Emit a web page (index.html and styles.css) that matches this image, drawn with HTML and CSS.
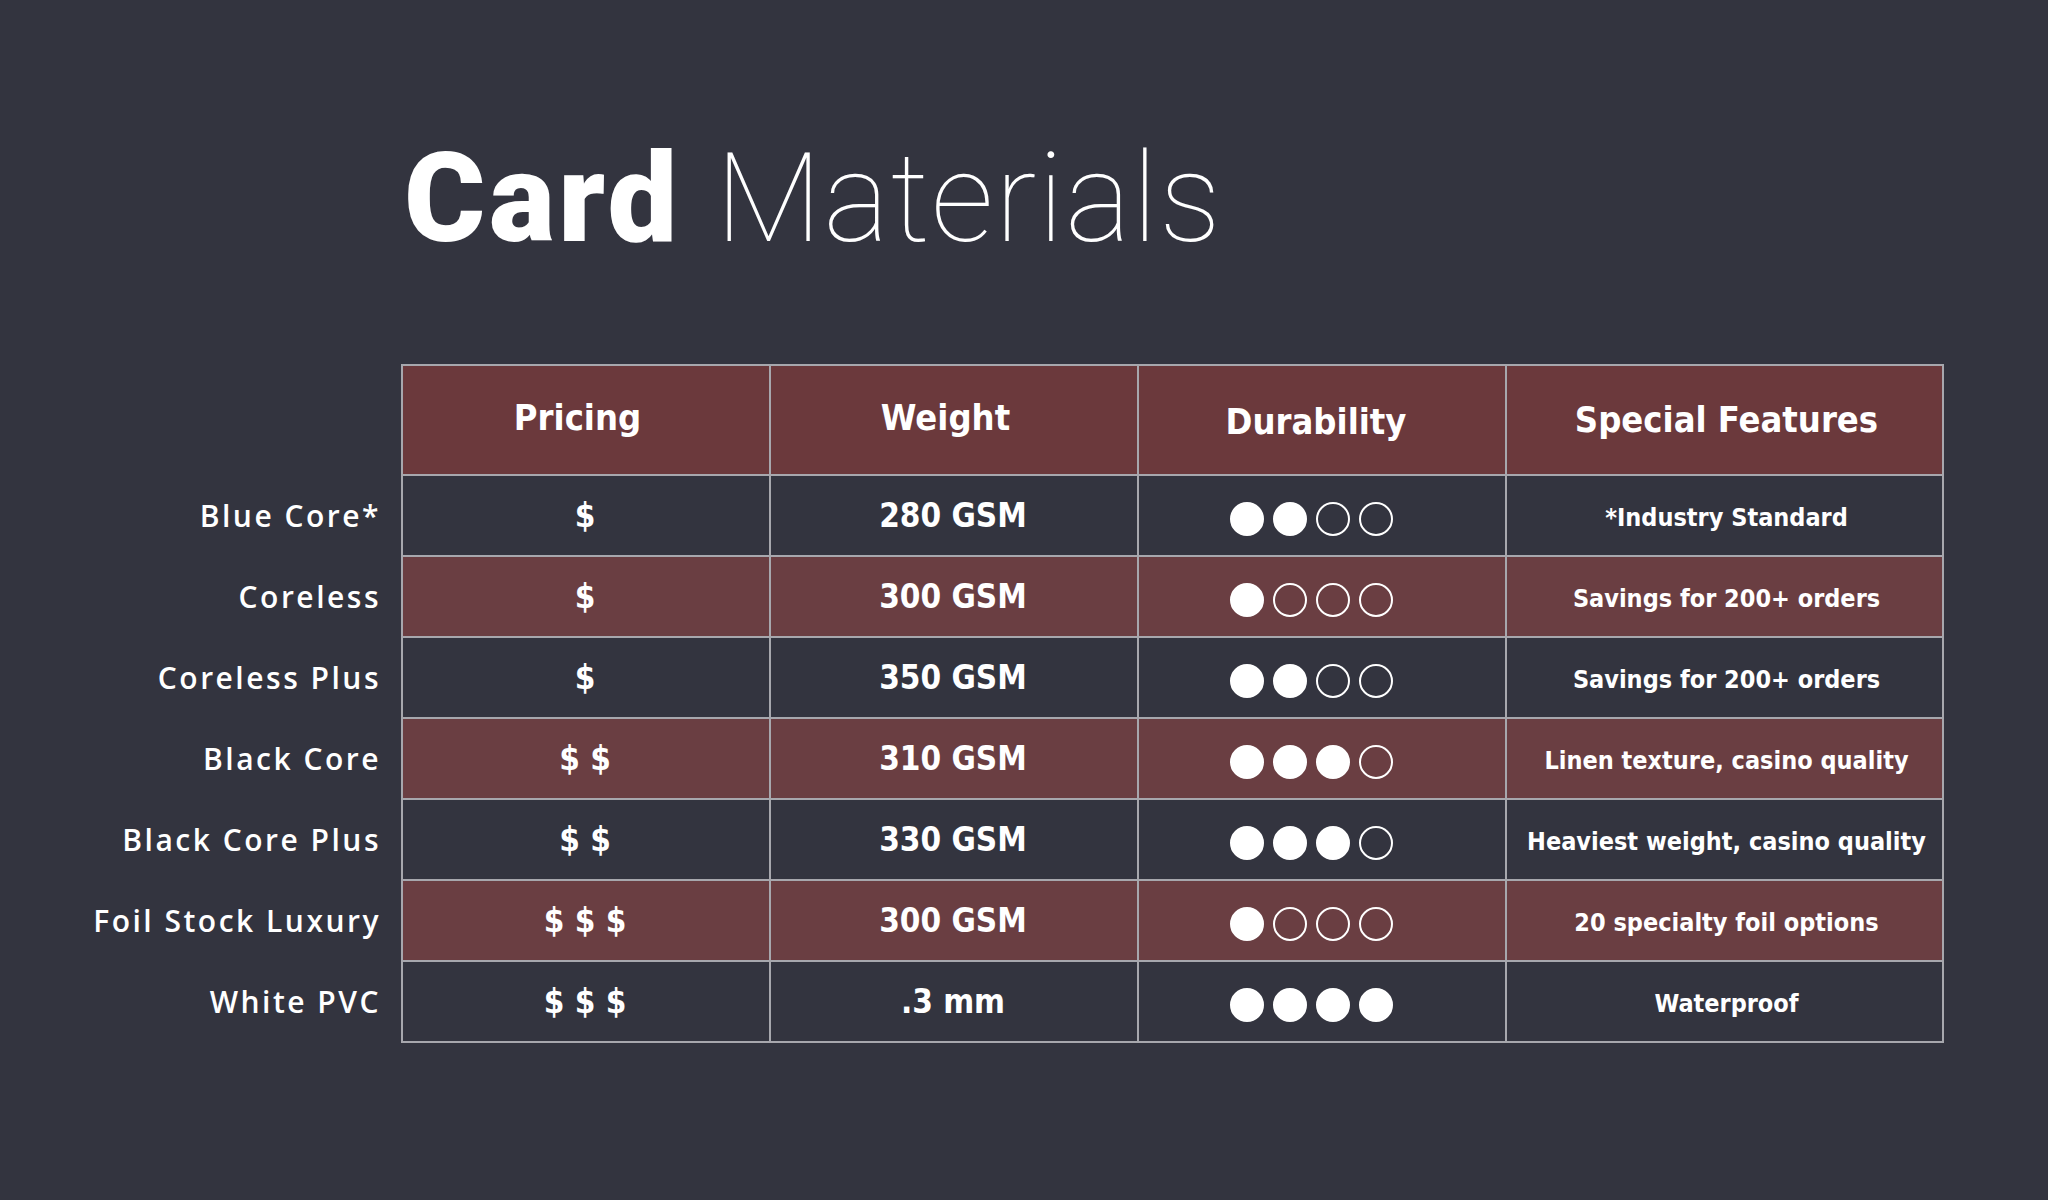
FILE: index.html
```html
<!DOCTYPE html>
<html lang="en">
<head>
<meta charset="utf-8">
<title>Card Materials</title>
<link rel="stylesheet" href="styles.css">
</head>
<body>
<main class="page">
  <h1 class="title"><span class="title-bold">Card</span> <span class="title-light">Materials</span></h1>
  <table class="materials">
    <colgroup>
      <col class="col-label">
      <col class="col-price">
      <col class="col-weight">
      <col class="col-dur">
      <col class="col-feat">
    </colgroup>
    <thead>
      <tr class="head-row">
        <th class="corner"></th>
        <th class="head head-shift">Pricing</th>
        <th class="head head-shift">Weight</th>
        <th class="head head-low">Durability</th>
        <th class="head head-mid">Special Features</th>
      </tr>
    </thead>
    <tbody>
      <tr class="row dark">
        <th class="label">Blue Core*</th>
        <td class="val">$</td>
        <td class="val">280 GSM</td>
        <td class="dots"><span class="dot on"></span><span class="dot on"></span><span class="dot"></span><span class="dot"></span></td>
        <td class="feat">*Industry Standard</td>
      </tr>
      <tr class="row red">
        <th class="label">Coreless</th>
        <td class="val">$</td>
        <td class="val">300 GSM</td>
        <td class="dots"><span class="dot on"></span><span class="dot"></span><span class="dot"></span><span class="dot"></span></td>
        <td class="feat">Savings for 200+ orders</td>
      </tr>
      <tr class="row dark">
        <th class="label">Coreless Plus</th>
        <td class="val">$</td>
        <td class="val">350 GSM</td>
        <td class="dots"><span class="dot on"></span><span class="dot on"></span><span class="dot"></span><span class="dot"></span></td>
        <td class="feat">Savings for 200+ orders</td>
      </tr>
      <tr class="row red">
        <th class="label">Black Core</th>
        <td class="val">$ $</td>
        <td class="val">310 GSM</td>
        <td class="dots"><span class="dot on"></span><span class="dot on"></span><span class="dot on"></span><span class="dot"></span></td>
        <td class="feat">Linen texture, casino quality</td>
      </tr>
      <tr class="row dark">
        <th class="label">Black Core Plus</th>
        <td class="val">$ $</td>
        <td class="val">330 GSM</td>
        <td class="dots"><span class="dot on"></span><span class="dot on"></span><span class="dot on"></span><span class="dot"></span></td>
        <td class="feat">Heaviest weight, casino quality</td>
      </tr>
      <tr class="row red">
        <th class="label">Foil Stock Luxury</th>
        <td class="val">$ $ $</td>
        <td class="val">300 GSM</td>
        <td class="dots"><span class="dot on"></span><span class="dot"></span><span class="dot"></span><span class="dot"></span></td>
        <td class="feat">20 specialty foil options</td>
      </tr>
      <tr class="row dark">
        <th class="label">White PVC</th>
        <td class="val">$ $ $</td>
        <td class="val">.3 mm</td>
        <td class="dots"><span class="dot on"></span><span class="dot on"></span><span class="dot on"></span><span class="dot on"></span></td>
        <td class="feat">Waterproof</td>
      </tr>
    </tbody>
  </table>
</main>
</body>
</html>
```

FILE: styles.css
```css
html, body {
  margin: 0;
  padding: 0;
  background: #33343f;
  width: 2048px;
  height: 1200px;
  overflow: hidden;
}

.page {
  padding-top: 137px;
  color: #ffffff;
}

.title {
  margin: 0 0 103px 404px;
  font-family: Roboto, "Liberation Sans", sans-serif;
  font-size: 124px;
  line-height: 124px;
  font-weight: normal;
  color: #ffffff;
  white-space: nowrap;
}

.title-bold {
  font-weight: 900;
  letter-spacing: 3.5px;
}

.title-light {
  font-weight: 100;
  letter-spacing: 1.5px;
  margin-left: 4px;
}

.materials {
  border-collapse: collapse;
  table-layout: fixed;
  width: 1943px;
  color: #ffffff;
  font-family: "DejaVu Sans Condensed", "DejaVu Sans", sans-serif;
  font-stretch: condensed;
}

.col-label { width: 402px; }
.col-price { width: 368px; }
.col-weight { width: 368px; }
.col-dur { width: 368px; }
.col-feat { width: 437px; }

.materials td,
.materials th.head {
  border: 2px solid #a7a7ad;
  text-align: center;
  padding: 0;
}

.head-row {
  height: 110px;
}

.corner {
  border: none;
  background: #33343f;
}

.head {
  background: #6b393c;
  font-size: 36px;
  font-weight: bold;
}

.materials th.head-shift {
  padding: 0 17px 6px 0;
}

.materials th.head-low {
  padding: 2px 12px 0 0;
}

.materials th.head-mid {
  padding: 0 0 2px 4px;
}

.row {
  height: 81px;
}

.row.red td {
  background: #6a3e42;
}

.row.dark td {
  background: #33343f;
}

.label {
  text-align: right;
  padding: 0 20px 0 0;
  font-family: "Open Sans", "DejaVu Sans", sans-serif;
  font-stretch: normal;
  font-size: 30px;
  font-weight: 600;
  letter-spacing: 2.5px;
  background: #33343f;
  border: none;
  white-space: nowrap;
}

.materials td.val {
  font-size: 33px;
  font-weight: bold;
  white-space: nowrap;
  padding: 0 2px 0 0;
}

.materials td.feat {
  font-size: 25px;
  font-weight: bold;
  white-space: nowrap;
  padding: 4px 0 0 4px;
}

.materials td.dots {
  white-space: nowrap;
  font-size: 0;
  padding: 7px 22px 0 0;
}

.dot {
  display: inline-block;
  width: 34px;
  height: 34px;
  box-sizing: border-box;
  border: 2px solid #ffffff;
  border-radius: 50%;
  margin: 0 4.5px;
  vertical-align: middle;
}

.dot.on {
  background: #ffffff;
}
```
